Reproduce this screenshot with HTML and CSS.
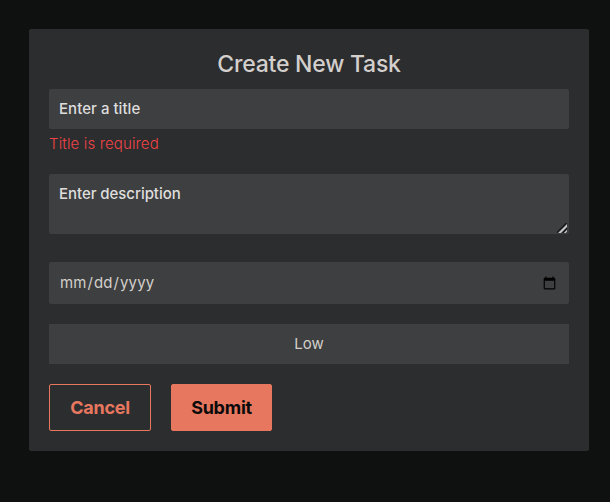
FILE: index.html
```html
<!DOCTYPE html>
<html lang="en">
<head>
<meta charset="utf-8">
<title>Create New Task</title>
<link rel="stylesheet" href="styles.css">
</head>
<body>
<form class="card">
  <h2 class="title">Create New Task</h2>
  <input class="field name" type="text" placeholder="Enter a title">
  <p class="error">Title is required</p>
  <div class="description-wrap">
    <textarea class="field description" placeholder="Enter description"></textarea>
    <svg class="grip" width="10" height="10" viewBox="0 0 10 10">
      <path d="M0 10V8.5L8.5 0H10V10Z" fill="#1b1b1c"/>
      <path d="M1 10L10 1V4L4 10ZM6.8 10L10 6.8V8.8L8.8 10Z" fill="#c6c9c9"/>
    </svg>
  </div>
  <input class="field date" type="date">
  <button class="priority" type="button">Low</button>
  <div class="actions">
    <button class="btn cancel" type="button">Cancel</button>
    <button class="btn submit" type="button">Submit</button>
  </div>
</form>
</body>
</html>
```
FILE: styles.css
```css
* { box-sizing: border-box; }
body {
  margin: 0;
  padding: 29px 21px 0 29px;
  background: #0f1110;
  font-family: Inter, sans-serif;
  overflow: hidden;
}
.card {
  height: 422px;
  padding: 20px;
  border-radius: 2px;
  background: #2c2d2e;
  display: flex;
  flex-direction: column;
}
.title {
  margin: 0;
  padding: 1px 0 10px;
  text-align: center;
  font-size: 23px;
  line-height: 29px;
  font-weight: 500;
  letter-spacing: -0.22px;
  color: #d3cfcd;
}
.field, .priority {
  display: block;
  width: 100%;
  margin: 0;
  border: 0;
  border-radius: 2px;
  background: #3e3f40;
  color: #d3cfcb;
  font: 400 15px Inter, sans-serif;
  padding: 10px;
}
.field::placeholder { color: #dfdedd; opacity: 1; font-weight: 500; letter-spacing: -0.05px; }
.name { height: 40px; padding: 9px 10px 11px; }
.name::placeholder { letter-spacing: 0.04px; }
.error {
  margin: 5px 0 20px;
  font-size: 15px;
  line-height: 20px;
  font-weight: 300;
  letter-spacing: 0.14px;
  color: #f04347;
}
.description-wrap { position: relative; height: 60px; }
.description { height: 60px; resize: vertical; }
.description::-webkit-resizer { background: transparent; }
.grip { position: absolute; right: 2px; bottom: 1px; pointer-events: none; }
.date { height: 42px; margin-top: 28px; padding: 9px 10px 11px; letter-spacing: 0.1px; }
.date::-webkit-calendar-picker-indicator { position: relative; top: 1px; }
.priority { height: 40px; margin-top: 20px; padding: 9px 10px 11px; border-radius: 0; }
.actions { display: flex; gap: 20px; margin-top: 20px; }
.btn {
  height: 47px;
  border: 1px solid #e8775f;
  border-radius: 2px;
  padding: 0;
  font: 700 18px Inter, sans-serif;
  letter-spacing: -0.25px;
}
.cancel { width: 102px; background: transparent; color: #e8775f; }
.submit { width: 101px; background: #e8775f; color: #0b0b0b; }
```
